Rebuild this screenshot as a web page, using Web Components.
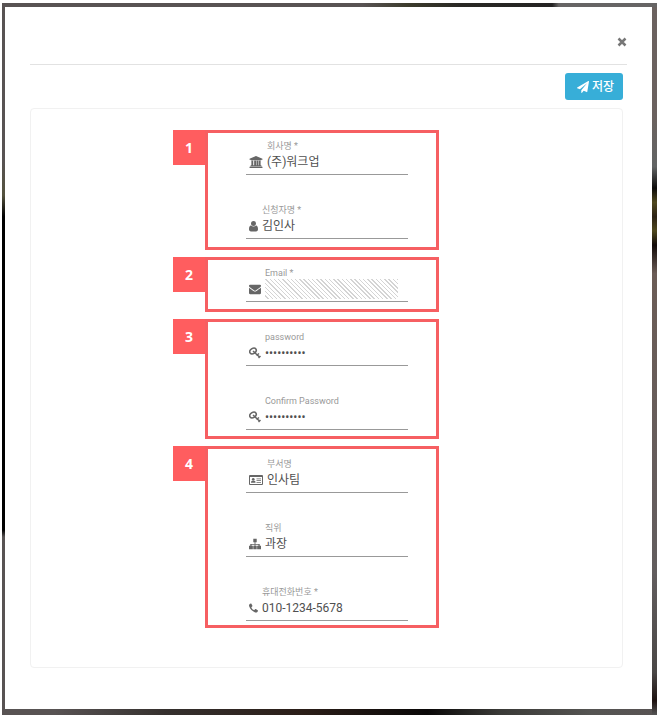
<!DOCTYPE html>
<html lang="ko">
<head>
<meta charset="utf-8">
<meta name="viewport" content="width=device-width, initial-scale=1">
<title>회원 정보</title>
<style>
  body {
    margin: 3px 3px 4px 2px;
    background: #fff;
    color: #444;
    font-family: Roboto, "Noto Sans CJK KR", sans-serif;
  }
</style>
</head>
<body>
<modal-window>
  <save-button slot="toolbar">저장</save-button>

  <form-group number="1">
    <form-field label="회사명 *" value="(주)워크업" icon="bank"></form-field>
    <form-field label="신청자명 *" value="김인사" icon="user"></form-field>
  </form-group>

  <form-group number="2">
    <form-field label="Email *" type="email" icon="envelope" masked></form-field>
  </form-group>

  <form-group number="3">
    <form-field label="password" type="password" value="workup1234" icon="key"></form-field>
    <form-field label="Confirm Password" type="password" value="workup1234" icon="key"></form-field>
  </form-group>

  <form-group number="4">
    <form-field label="부서명" value="인사팀" icon="card"></form-field>
    <form-field label="직위" value="과장" icon="sitemap"></form-field>
    <form-field label="휴대전화번호 *" type="tel" value="010-1234-5678" icon="phone"></form-field>
  </form-group>
</modal-window>

<script>
const ICONS = {
  bank: {
    width: 14,
    box: "0 0 28 26",
    body: `<path d="M14 0 28 6v2h-2a1 1 0 0 1-1 1H3a1 1 0 0 1-1-1H0V6z"/>
      <path d="M4 10h4v10h2V10h4v10h1V10h4v10h1V10h4v10h1a1 1 0 0 1 1 1v1H2v-1a1 1 0 0 1 1-1h1z"/>
      <path d="M1 23h26a1 1 0 0 1 1 1v2H0v-2a1 1 0 0 1 1-1z"/>`,
  },
  user: {
    width: 9,
    box: "0 0 18 22",
    body: `<circle cx="9" cy="6" r="5"/>
      <path d="M4 10c1.500 1.500 3 2.200 5 2.200s3.500-.7 5-2.200c3 .3 4 3.500 4 7.500 0 2.500-1.500 4.500-4 4.500H4c-2.500 0-4-2-4-4.500C0 13.500 1 10.300 4 10z"/>`,
  },
  envelope: {
    width: 12,
    box: "0 0 1792 1792",
    body: `<path d="M1792 710v794q0 66-47 113t-113 47h-1472q-66 0-113-47t-47-113v-794q44 49 101 87 362 246 497 345 57 42 92.500 65.500t94.500 48 110 24.500h2q51 0 110-24.500t94.500-48 92.500-65.500q170-123 498-345 57-39 100-87zm0-294q0 79-49 151t-122 123q-376 261-468 325-10 7-42.500 31t-54 38.500-52 32.500-57.500 27-50 9h-2q-23 0-50-9t-57.500-27-52-32.500-54-38.500-42.500-31q-91-64-262-182.500t-205-142.500q-62-42-117-115.500t-55-136.500q0-78 41.500-130t118.500-52h1472q65 0 112.500 47t47.500 113z"/>`,
  },
  key: {
    width: 12,
    box: "0 0 24 24",
    body: `<g fill="none" stroke="currentColor" stroke-width="3">
        <ellipse cx="8" cy="8" rx="7" ry="5" transform="rotate(-35 8 8)"/>
        <path d="m8 8 13 12M15 17l5-4M19 22l4-4"/>
      </g>`,
  },
  card: {
    width: 14,
    box: "0 0 28 22",
    body: `<path fill-rule="evenodd" d="M2 1h24a2 2 0 0 1 2 2v16a2 2 0 0 1-2 2H2a2 2 0 0 1-2-2V3a2 2 0 0 1 2-2zm0 4v14h24V5z"/>
      <circle cx="8.500" cy="9.500" r="2.700"/>
      <path d="M4 16.500c0-3 1-4.500 4.500-4.500s4.500 1.500 4.500 4.500z"/>
      <path d="M15 8h9v1.700h-9zM15 11.500h9v1.700h-9zM15 15h9v1.700h-9z"/>`,
  },
  sitemap: {
    width: 12,
    box: "0 0 28 24",
    body: `<path d="M10 0h8v8h-3v4h10v4h3v8h-9v-8h3v-2h-7v2h3v8h-8v-8h3v-2H6v2h3v8H0v-8h3v-4h10V8h-3z"/>`,
  },
  phone: {
    width: 9,
    box: "0 0 22 22",
    body: `<path d="M22 17.200c0 1.600-.9 3.200-2.200 3.900-1.300.8-3 1.100-4.800.6C8 19.500 2.500 14 .4 7c-.6-1.900-.3-3.600.4-4.800C1.600.9 3.200 0 4.800 0c.6 0 .8.300 1 .7l2.600 4.700c.3.700.1 1.100-.4 1.600L6 9c-.3.400-.3.700-.1 1.100 1.300 2.600 3.400 4.700 6 6 .4.200.7.200 1.100-.1l2-2c.5-.5.900-.7 1.600-.4l4.700 2.600c.5.300.7.500.7 1z"/>`,
  },
  plane: {
    width: 12,
    box: "0 0 1792 1792",
    body: `<path d="M1764 11q33 24 27 64l-256 1536q-5 29-32 45-14 8-31 8-11 0-24-5l-453-185-242 295q-18 23-49 23-13 0-22-4-19-7-30.500-23.500t-11.500-36.500v-349l864-1059-1069 925-395-162q-37-14-40-55-2-40 32-59l1664-960q15-9 32-9 20 0 36 11z"/>`,
  },
  times: {
    width: 10,
    box: "0 0 20 20",
    body: `<path d="m3 3 14 14M17 3 3 17" fill="none" stroke="currentColor" stroke-width="5"/>`,
  },
};

class UiIcon extends HTMLElement {
  constructor() {
    super();
    this.attachShadow({ mode: "open" });
  }

  connectedCallback() {
    const icon = ICONS[this.getAttribute("name")];
    this.shadowRoot.innerHTML = `
      <style>
        :host {
          display: inline-flex;
          align-items: center;
          justify-content: center;
        }

        svg {
          display: block;
          fill: currentColor;
        }
      </style>
      <svg width="${icon.width}" height="12" viewBox="${icon.box}" aria-hidden="true">${icon.body}</svg>
    `;
  }
}

class SaveButton extends HTMLElement {
  constructor() {
    super();
    this.attachShadow({ mode: "open" }).innerHTML = `
      <style>
        :host {
          display: block;
        }

        button {
          display: flex;
          align-items: center;
          gap: 3px;
          height: 27px;
          padding: 0 9px 0 12px;
          border: 0;
          border-radius: 3px;
          background: #37aed8;
          color: #fff;
          font: 500 12px/18px Roboto, "Noto Sans CJK KR", sans-serif;
          cursor: pointer;
        }
      </style>
      <button type="button"><ui-icon name="plane"></ui-icon><slot></slot></button>
    `;
  }
}

class ModalWindow extends HTMLElement {
  constructor() {
    super();
    this.attachShadow({ mode: "open" }).innerHTML = `
      <style>
        :host {
          display: block;
          padding: 4px 5px 6px 3px;
          background:
            linear-gradient(to right, transparent 55%, #3c3b2c 62%, #292824 70%, #242323 84%, #666464 85%) top / 100% 4px no-repeat,
            linear-gradient(to right, transparent 8%, #35302e 25%, #2b1e18 46%, #0a0808 65%, #3a3a37 76%, #555452 90%, transparent) bottom / 100% 6px no-repeat,
            linear-gradient(to bottom, transparent 22%, #54523e 27%, #000 30%, #000 74%, transparent 75%) left / 3px 100% no-repeat,
            linear-gradient(to bottom, #6b625f 16%, #626464 23%, #0c0b0a 26%, #50491f 28%, #2c2215 30%, #50491f 32%, #120b09 34%, #6b5c56 38%, #625d5e 80%, #4a4746 94%, #1d1210 98%, #555) right / 5px 100% no-repeat,
            #585353;
        }

        .modal {
          padding: 0 25px 41px;
          background: #fff;
        }

        header {
          display: flex;
          align-items: center;
          justify-content: flex-end;
          height: 58px;
          padding-top: 12px;
          box-sizing: border-box;
          border-bottom: 1px solid #e2e2e2;
        }

        .close {
          display: flex;
          padding: 0;
          border: 0;
          background: none;
          color: #777;
          cursor: pointer;
        }

        .toolbar {
          display: flex;
          justify-content: flex-end;
          margin: 8px 4px 8px 0;
        }

        .panel {
          display: flex;
          flex-direction: column;
          align-items: center;
          gap: 7px;
          margin-right: 4px;
          padding: 21px 41px 39px 0;
          border: 1px solid #f1f1f1;
          border-radius: 4px;
        }
      </style>
      <section class="modal" role="dialog" aria-label="회원 정보">
        <header>
          <button class="close" type="button" aria-label="닫기"><ui-icon name="times"></ui-icon></button>
        </header>
        <div class="toolbar"><slot name="toolbar"></slot></div>
        <form class="panel"><slot></slot></form>
      </section>
    `;
  }
}

class FormGroup extends HTMLElement {
  constructor() {
    super();
    this.attachShadow({ mode: "open" });
  }

  connectedCallback() {
    this.shadowRoot.innerHTML = `
      <style>
        :host {
          display: flex;
          align-items: flex-start;
        }

        .number {
          width: 32px;
          background: #ff5d5f;
          color: #fff;
          font: 700 14px/35px "Open Sans", sans-serif;
          text-align: center;
        }

        .frame {
          display: flex;
          flex-direction: column;
          gap: 29px;
          padding: 7px 28px 8px 38px;
          border: 3px solid #f65f62;
        }

        :host([number="2"]) .frame {
          padding-bottom: 7px;
        }

        :host([number="3"]) .frame {
          padding-top: 9px;
          padding-bottom: 6px;
        }

        :host([number="4"]) .frame {
          padding-top: 9px;
          padding-bottom: 4px;
        }
      </style>
      <div class="number">${this.getAttribute("number")}</div>
      <div class="frame"><slot></slot></div>
    `;
  }
}

class FormField extends HTMLElement {
  constructor() {
    super();
    this.attachShadow({ mode: "open" });
  }

  connectedCallback() {
    const type = this.getAttribute("type") || "text";
    const value = this.getAttribute("value") || "";

    this.shadowRoot.innerHTML = `
      <style>
        :host {
          display: grid;
          grid-template-columns: auto 1fr;
          column-gap: 4px;
          width: 162px;
          padding: 0 0 2px 3px;
          box-sizing: border-box;
          border-bottom: 1px solid #999;
        }

        label {
          grid-column: 2;
          color: #999;
          font-size: 9px;
          line-height: 12px;
        }

        input {
          width: 100%;
          min-width: 0;
          height: 20px;
          padding: 0;
          border: 0;
          outline: 0;
          background: none;
          color: #505050;
          font: 12px/20px Roboto, "Noto Sans CJK KR", sans-serif;
        }

        ui-icon {
          color: #666;
        }

        :host([masked]) input {
          background: repeating-linear-gradient(45deg, #fff 0 2px, #d4d4d4 2px 3px) left top / 133px 20px no-repeat;
        }
      </style>
      <label for="value">${this.getAttribute("label")}</label>
      <ui-icon name="${this.getAttribute("icon")}"></ui-icon>
      <input id="value" type="${type}" value="${value}" autocomplete="off">
    `;
  }
}

customElements.define("ui-icon", UiIcon);
customElements.define("save-button", SaveButton);
customElements.define("modal-window", ModalWindow);
customElements.define("form-group", FormGroup);
customElements.define("form-field", FormField);
</script>
</body>
</html>
